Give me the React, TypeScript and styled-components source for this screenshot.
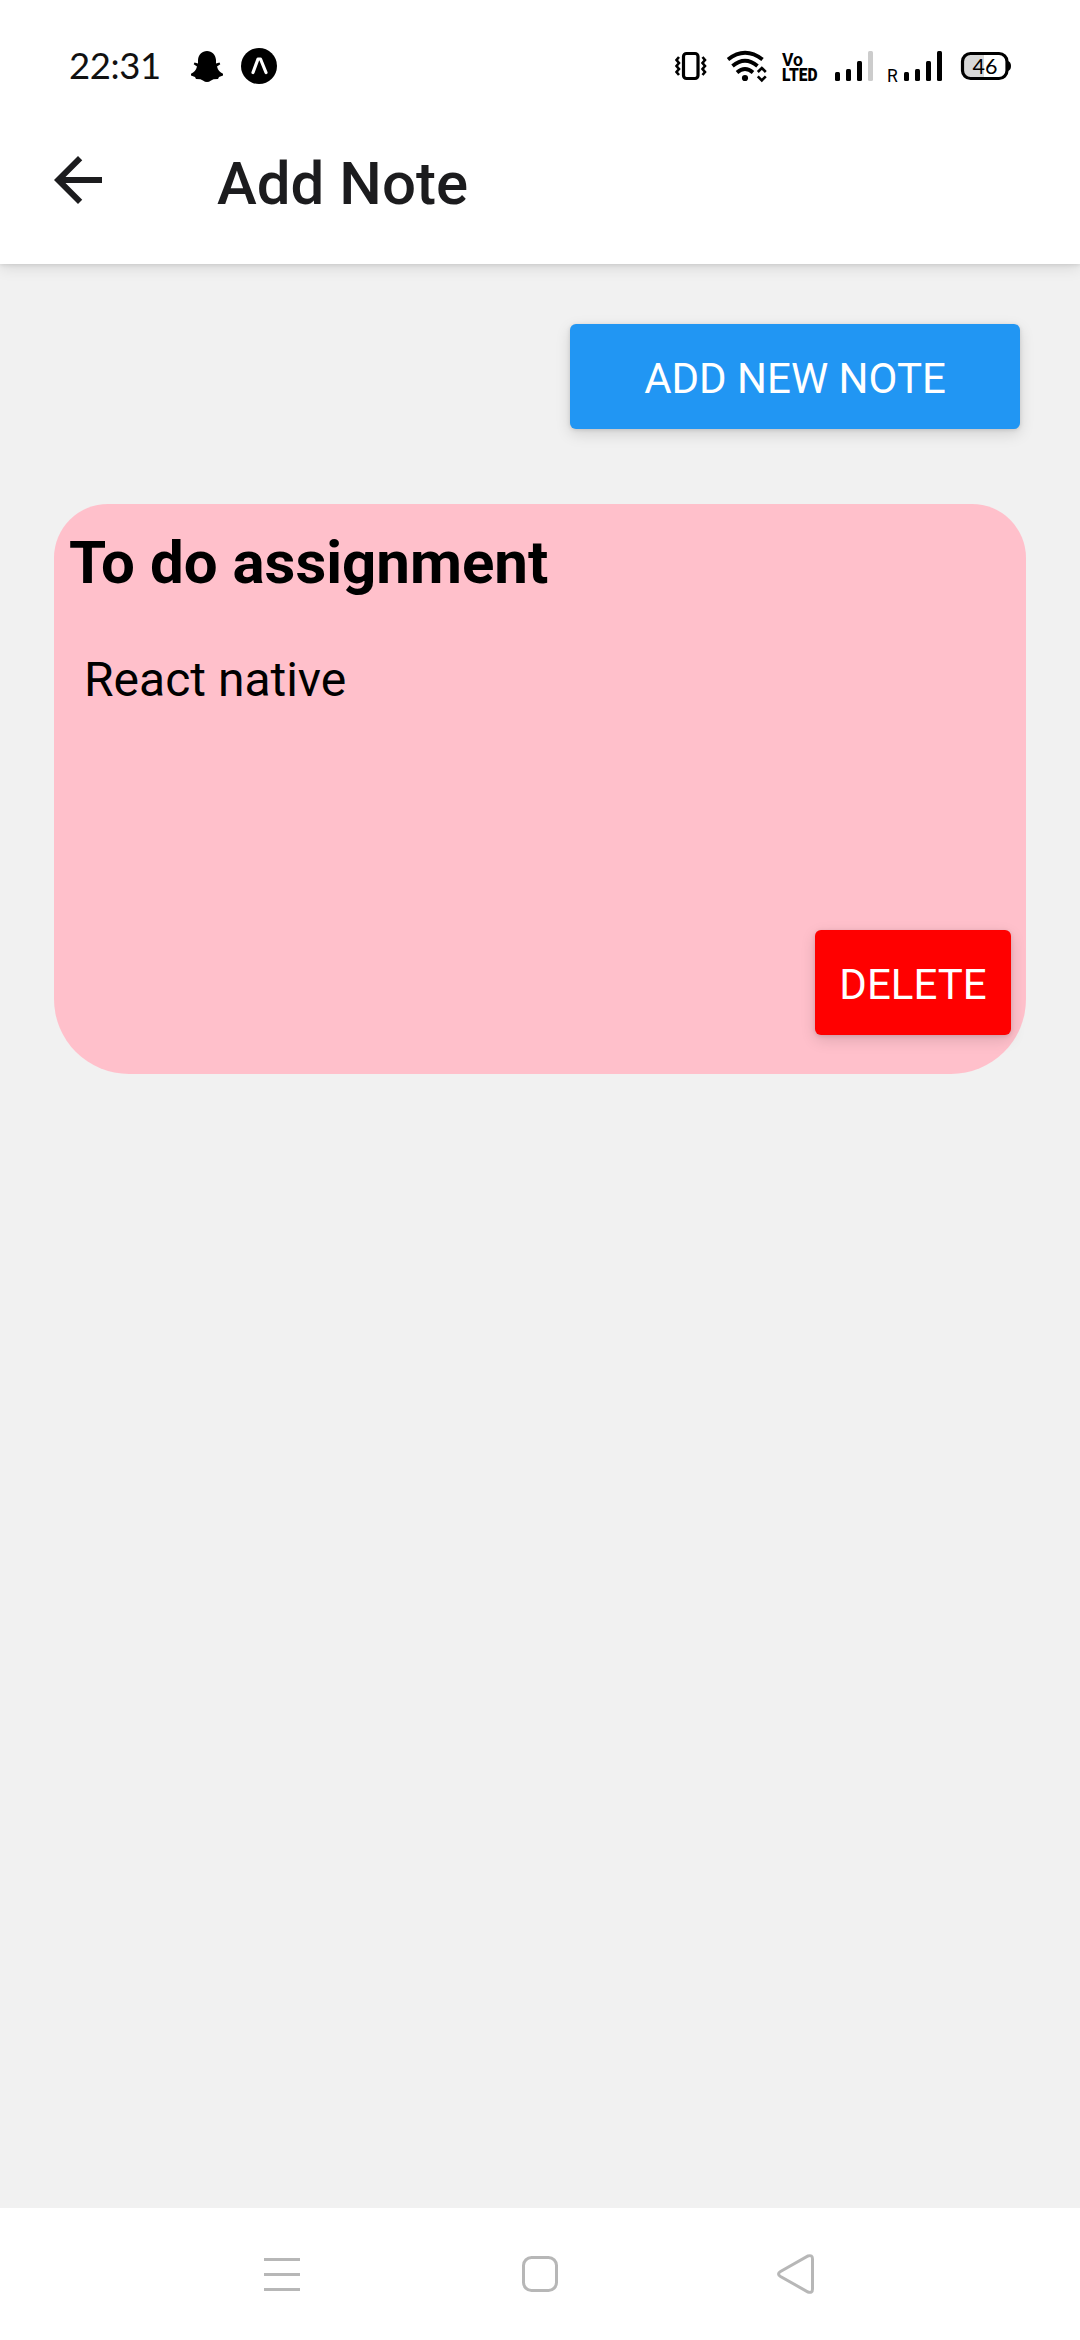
import React from "react";
import styled, { createGlobalStyle } from "styled-components";

const Global = createGlobalStyle`
  * { box-sizing: border-box; }
  body { margin: 0; background: #f1f1f1; font-family: Roboto, "Noto Sans", sans-serif; }
  svg { display: block; flex: none; }
`;

const Screen = styled.div`
  width: 1080px;
  height: 2340px;
  display: flex;
  flex-direction: column;
  background: #f1f1f1;
  overflow: hidden;
`;

const Header = styled.header`
  flex: none;
  height: 264px;
  background: #fff;
  box-shadow: 0 1px 4px rgba(0, 0, 0, 0.1), 0 4px 14px rgba(0, 0, 0, 0.1);
`;

const StatusBar = styled.div`
  height: 98px;
  display: flex;
  justify-content: space-between;
  padding: 0 69px;
`;

const StatusGroup = styled.div<{ $top: number }>`
  display: flex;
  align-items: flex-start;
  padding-top: ${(p) => p.$top}px;
`;

const Clock = styled.time`
  font: 400 36.5px/38px Lato, sans-serif;
  letter-spacing: -0.4px;
  width: 119px;
  color: #111;
`;

const TitleBar = styled.div`
  display: flex;
  align-items: center;
  height: 168px;
  padding: 0 42px;
`;

const BackButton = styled.button`
  width: 72px;
  height: 72px;
  padding: 0;
  border: 0;
  background: none;
  color: #1c1c1e;
  margin: 0 103px 4px 0;
`;

const Title = styled.h1`
  margin: 0;
  padding-top: 3px;
  font: 500 60px/70px Roboto, sans-serif;
  color: #1c1c1e;
`;

const Content = styled.main`
  flex: 1;
  display: flex;
  flex-direction: column;
  padding: 60px 54px 0;
`;

const Button = styled.button<{ $color: string; $width: number }>`
  align-self: flex-end;
  width: ${(p) => p.$width}px;
  height: 105px;
  padding: 5px 0 0;
  border: 0;
  border-radius: 6px;
  background: ${(p) => p.$color};
  color: #fff;
  font: 400 42px/50px Roboto, sans-serif;
  white-space: nowrap;
  box-shadow: 0 5px 15px rgba(0, 0, 0, 0.13), 0 1px 4px rgba(0, 0, 0, 0.12);
`;

const Toolbar = styled.div`
  display: flex;
  justify-content: flex-end;
  padding-right: 6px;
`;

const Card = styled.article`
  display: flex;
  flex-direction: column;
  height: 570px;
  margin-top: 75px;
  padding: 15px 15px 39px;
  border-radius: 54px 54px 75px 75px;
  background: #ffc0cb;
  color: #000;
`;

const CardTitle = styled.h2`
  margin: 9px 0 0;
  font: 700 60px/70px Roboto, sans-serif;
`;

const CardText = styled.p`
  flex: 1;
  margin: 54px 0 0;
  padding-left: 15px;
  font: 400 48px/56px Roboto, sans-serif;
`;

const NavBar = styled.nav`
  flex: none;
  height: 132px;
  background: #fff;
  display: flex;
  align-items: center;
  justify-content: space-between;
  padding: 0 261px;
`;

const NavIcon = styled.svg.attrs({ width: 42, height: 42, viewBox: "0 0 42 42" })`
  fill: none;
  stroke: #b7b7b7;
  stroke-width: 3px;
`;

const StatusIcons = () => (
  <svg width="341" height="50" viewBox="670 40 341 50" fill="#000">
    <rect x="683.5" y="53.5" width="14.5" height="25" rx="3" fill="none" stroke="#000" strokeWidth="3.2" />
    <path d="M679 57l-2.500 3 2.500 3-2.500 3 2.500 3-2.500 3 2.500 3M702.500 57l2.500 3-2.500 3 2.500 3-2.500 3 2.500 3-2.500 3" fill="none" stroke="#000" strokeWidth="2.6" />
    <g fill="none" stroke="#000" strokeWidth="3.8">
      <path d="M728 59.500Q745 46 762.500 59.500" />
      <path d="M732.500 66Q745 55.500 757.500 66" />
      <path d="M737 72.500Q745 65.500 753 72.500" />
    </g>
    <circle cx="745" cy="78" r="3.1" />
    <path d="M757.800 72l4-4 4 4M757.800 76.300l4 4 4-4" fill="none" stroke="#000" strokeWidth="2.6" />
    <text x="782" y="65.500" fontFamily="Roboto" fontWeight="700" fontSize="19" textLength="21" lengthAdjust="spacingAndGlyphs">Vo</text>
    <text x="782" y="81" fontFamily="Roboto" fontWeight="900" fontSize="18.500" textLength="35.500" lengthAdjust="spacingAndGlyphs">LTED</text>
    <rect x="835" y="72" width="5" height="9" rx="1.500" />
    <rect x="846" y="69" width="5" height="12" rx="1.500" />
    <rect x="857" y="61" width="5" height="20" rx="1.500" />
    <rect x="868" y="51" width="5" height="30" rx="1.500" fill="#ccc" />
    <text x="887" y="81.500" fontFamily="Roboto" fontWeight="400" fontSize="17.500">R</text>
    <rect x="904" y="72" width="5" height="9" rx="1.500" />
    <rect x="915" y="69" width="5" height="12" rx="1.500" />
    <rect x="926" y="61" width="5" height="20" rx="1.500" />
    <rect x="937" y="51" width="5" height="30" rx="1.500" />
    <path d="M984 54h-13q-9 0-9 9v6q0 9 9 9h13z" fill="#d8d8d8" />
    <rect x="962.500" y="53.500" width="44.500" height="25" rx="8" fill="none" stroke="#000" strokeWidth="3.2" />
    <path d="M1008 61q3 1 3 5t-3 5z" />
    <text x="972.500" y="73.500" fontFamily="Lato" fontSize="21.500" textLength="25">46</text>
  </svg>
);

const AppIcons = () => (
  <svg width="90" height="40" viewBox="188 46 90 40">
    <path d="M207 51c5 0 8.500 3.500 9 9v3.500l3.500-1 .8 1.800-3.300 2.200c.8 3.500 3 6 6 7.200v1.800l-4 1.500-1 2-4.500.2c-2 .6-3.500 2.800-6.500 2.800s-4.500-2.200-6.500-2.800l-4.500-.2-1-2-4-1.500v-1.800c3-1.200 5.200-3.700 6-7.200l-3.300-2.200.8-1.800 3.500 1V60c.5-5.500 4-9 9-9z" />
    <circle cx="259" cy="66" r="18" />
    <path d="M253 72.500l5-13.500h2.500l5.500 13.500" fill="none" stroke="#fff" strokeWidth="3.2" strokeLinecap="round" strokeLinejoin="round" />
  </svg>
);

export default function App() {
  return (
    <>
      <Global />
      <Screen>
        <Header>
          <StatusBar>
            <StatusGroup $top={46}>
              <Clock>22:31</Clock>
              <AppIcons />
            </StatusGroup>
            <StatusGroup $top={40}>
              <StatusIcons />
            </StatusGroup>
          </StatusBar>
          <TitleBar>
            <BackButton aria-label="Back">
              <svg width="72" height="72" viewBox="0 0 24 24" fill="currentColor">
                <path d="M20 11H7.830l5.590-5.590L12 4l-8 8 8 8 1.410-1.410L7.830 13H20v-2z" />
              </svg>
            </BackButton>
            <Title>Add Note</Title>
          </TitleBar>
        </Header>
        <Content>
          <Toolbar>
            <Button $color="#2196f3" $width={450}>ADD NEW NOTE</Button>
          </Toolbar>
          <Card>
            <CardTitle>To do assignment</CardTitle>
            <CardText>React native</CardText>
            <Button $color="#ff0000" $width={196}>DELETE</Button>
          </Card>
        </Content>
        <NavBar>
          <NavIcon>
            <path d="M3 6.500h36M3 21.500h36M3 36.500h36" />
          </NavIcon>
          <NavIcon>
            <rect x="4.500" y="4.500" width="33" height="33" rx="8" />
          </NavIcon>
          <NavIcon>
            <path d="M31 3Q35.500 1.500 35.500 6V36Q35.500 40.500 31 39L3.500 23.500Q-.5 21 3.500 18.500Z" />
          </NavIcon>
        </NavBar>
      </Screen>
    </>
  );
}
